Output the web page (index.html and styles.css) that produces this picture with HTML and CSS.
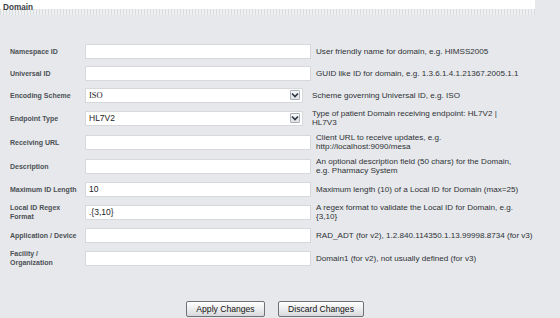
FILE: index.html
```html
<!DOCTYPE html>
<html>
<head>
<meta charset="utf-8">
<title>Domain</title>
<link rel="stylesheet" href="styles.css">
</head>
<body>
<div class="panel">
  <div class="panel-head"><span class="title">Domain</span></div>
  <div class="form">
    <div class="label">Namespace ID</div>
    <div class="field"><input class="text" type="text" value=""></div>
    <div class="help">User friendly name for domain, e.g. HIMSS2005</div>

    <div class="label">Universal ID</div>
    <div class="field"><input class="text" type="text" value=""></div>
    <div class="help">GUID like ID for domain, e.g. 1.3.6.1.4.1.21367.2005.1.1</div>

    <div class="label">Encoding Scheme</div>
    <div class="field"><div class="select"><span class="value serif">ISO</span><span class="arrow"><svg width="8" height="6" viewBox="0 0 8 6"><path d="M1 1.5 L4 4.5 L7 1.5" fill="none" stroke="#2b3440" stroke-width="1.6"/></svg></span></div></div>
    <div class="help sel">Scheme governing Universal ID, e.g. ISO</div>

    <div class="label">Endpoint Type</div>
    <div class="field"><div class="select"><span class="value">HL7V2</span><span class="arrow"><svg width="8" height="6" viewBox="0 0 8 6"><path d="M1 1.5 L4 4.5 L7 1.5" fill="none" stroke="#2b3440" stroke-width="1.6"/></svg></span></div></div>
    <div class="help sel">Type of patient Domain receiving endpoint: HL7V2 | HL7V3</div>

    <div class="label">Receiving URL</div>
    <div class="field"><input class="text" type="text" value=""></div>
    <div class="help">Client URL to receive updates, e.g. http://localhost:9090/mesa</div>

    <div class="label">Description</div>
    <div class="field"><input class="text" type="text" value=""></div>
    <div class="help tight">An optional description field (50 chars) for the Domain, e.g. Pharmacy System</div>

    <div class="label">Maximum ID Length</div>
    <div class="field"><input class="text" type="text" value="10"></div>
    <div class="help">Maximum length (10) of a Local ID for Domain (max=25)</div>

    <div class="label">Local ID Regex Format</div>
    <div class="field"><input class="text" type="text" value=".{3,10}"></div>
    <div class="help">A regex format to validate the Local ID for Domain, e.g. {3,10}</div>

    <div class="label">Application / Device</div>
    <div class="field"><input class="text" type="text" value=""></div>
    <div class="help nowrap">RAD_ADT (for v2), 1.2.840.114350.1.13.99998.8734 (for v3)</div>

    <div class="label">Facility / Organization</div>
    <div class="field"><input class="text" type="text" value=""></div>
    <div class="help">Domain1 (for v2), not usually defined (for v3)</div>
  </div>
  <div class="actions">
    <button class="btn apply" type="button">Apply Changes</button>
    <button class="btn discard" type="button">Discard Changes</button>
  </div>
  <div class="panel-foot"></div>
</div>
</body>
</html>
```

FILE: styles.css
```css
html, body {
  margin: 0;
  padding: 0;
}
body {
  background: #e6e8eb;
  width: 560px;
  height: 318px;
  overflow: hidden;
  font-family: "Liberation Sans", Arial, sans-serif;
}
.panel {
  width: 560px;
}
.panel-head {
  width: 535px;
  height: 15px;
  background:
    linear-gradient(#ffffff, #ffffff) top left / 100% 9px no-repeat,
    repeating-linear-gradient(90deg, #d9dcdf 0 1px, #eef0f2 1px 3px);
  box-sizing: border-box;
  padding: 3px 0 0 3px;
}
.title {
  display: block;
  font-weight: bold;
  font-size: 8.2px;
  line-height: 9px;
  color: #3a3d42;
}
.form {
  display: grid;
  grid-template-columns: 70px 226px 213px;
  column-gap: 5px;
  row-gap: 6px;
  align-items: center;
  padding: 28px 0 0 10px;
}
.label {
  font-size: 7px;
  font-weight: bold;
  line-height: 9px;
  color: #4c5055;
}
.field {
  display: flex;
  align-items: center;
  min-height: 16px;
}
.text {
  box-sizing: border-box;
  width: 226px;
  height: 15px;
  margin: 0;
  padding: 0 3px;
  border: 1px solid #d6d8db;
  background: #ffffff;
  font-family: "Liberation Sans", Arial, sans-serif;
  font-size: 8.5px;
  color: #222;
  outline: none;
}
.select {
  box-sizing: border-box;
  width: 218px;
  height: 15px;
  display: flex;
  align-items: center;
  justify-content: space-between;
  background: #ffffff;
  border: 1px solid #d6d8db;
  padding: 0 2px 0 3px;
}
.value {
  font-size: 8.5px;
  color: #222;
}
.value.serif {
  font-family: "Liberation Serif", "Times New Roman", serif;
}
.arrow {
  box-sizing: border-box;
  width: 10px;
  height: 10px;
  display: flex;
  align-items: center;
  justify-content: center;
  border: 1px solid #a9b0b8;
  border-radius: 1px;
  background: linear-gradient(#f8f9fa, #dfe2e6);
}
.help {
  font-size: 8.1px;
  line-height: 9px;
  color: #2f3236;
}
.help.sel {
  margin-left: -4px;
  margin-right: 8px;
}
.help.tight {
  padding-right: 8px;
}
.help.nowrap {
  white-space: nowrap;
}
.actions {
  display: flex;
  justify-content: center;
  gap: 13px;
  padding-right: 10px;
  margin-top: 34px;
}
.btn {
  box-sizing: border-box;
  height: 16px;
  margin: 0;
  padding: 0;
  border: 1px solid #6f7378;
  border-radius: 2px;
  background: linear-gradient(#ffffff, #e9eaec 60%, #d5d8dc);
  font-family: "Liberation Sans", Arial, sans-serif;
  font-size: 8.6px;
  color: #111;
}
.apply {
  width: 79px;
}
.discard {
  width: 86px;
}
.panel-foot {
  height: 6px;
  margin-top: 1px;
  background: repeating-linear-gradient(90deg, #d9dcdf 0 1px, #eef0f2 1px 3px);
}
```
